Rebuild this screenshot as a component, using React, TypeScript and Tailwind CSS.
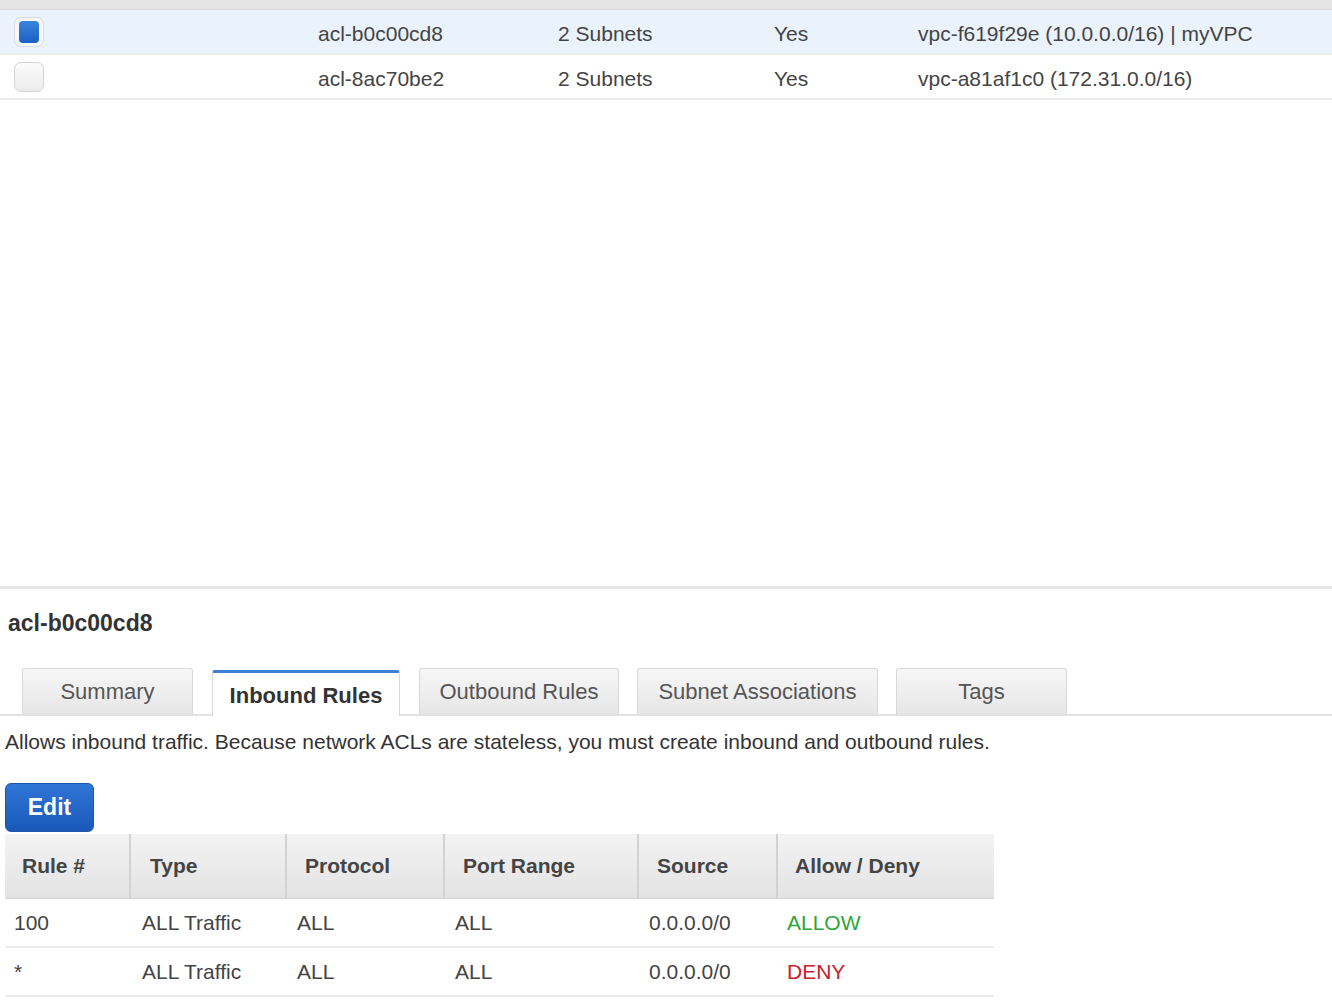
const ACLS = [
  { id: "acl-b0c00cd8", subnets: "2 Subnets", isDefault: "Yes", vpc: "vpc-f619f29e (10.0.0.0/16) | myVPC", selected: true },
  { id: "acl-8ac70be2", subnets: "2 Subnets", isDefault: "Yes", vpc: "vpc-a81af1c0 (172.31.0.0/16)", selected: false },
];

const TABS = [
  { label: "Summary", w: "w-[171px]", ml: "ml-[22px]" },
  { label: "Inbound Rules", w: "w-[188px]", ml: "ml-[19px]" },
  { label: "Outbound Rules", w: "w-[200px]", ml: "ml-[19px]" },
  { label: "Subnet Associations", w: "w-[241px]", ml: "ml-[18px]" },
  { label: "Tags", w: "w-[171px]", ml: "ml-[18px]" },
];

const RULES = [
  { rule: "100", type: "ALL Traffic", protocol: "ALL", port: "ALL", source: "0.0.0.0/0", action: "ALLOW" },
  { rule: "*", type: "ALL Traffic", protocol: "ALL", port: "ALL", source: "0.0.0.0/0", action: "DENY" },
];

const COLS = [
  { label: "Rule #", w: "w-[126px]", pl: "pl-[17px]", cpl: "pl-[9px]" },
  { label: "Type", w: "w-[156px]", pl: "pl-[19px]", cpl: "pl-[11px]" },
  { label: "Protocol", w: "w-[158px]", pl: "pl-[18px]", cpl: "pl-[10px]" },
  { label: "Port Range", w: "w-[194px]", pl: "pl-[18px]", cpl: "pl-[10px]" },
  { label: "Source", w: "w-[139px]", pl: "pl-[18px]", cpl: "pl-[10px]" },
  { label: "Allow / Deny", w: "w-[216px]", pl: "pl-[17px]", cpl: "pl-[9px]" },
];

function Checkbox({ checked }: { checked: boolean }) {
  if (checked) {
    return (
      <div className="w-[30px] h-[30px] rounded-[7px] border border-[#d6dbe2] bg-[#f4f6f9] flex items-center justify-center">
        <div className="w-[20px] h-[22px] rounded-[4px] bg-gradient-to-b from-[#3b84dc] to-[#1a60c4]" />
      </div>
    );
  }
  return (
    <div className="w-[30px] h-[30px] rounded-[7px] border border-[#d3d3d3] bg-gradient-to-b from-[#fbfbfb] to-[#ececec]" />
  );
}

export default function App() {
  return (
    <div className="w-[1332px] h-[1008px] overflow-hidden bg-white text-[#444] font-['Liberation_Sans',Arial,sans-serif]">
      <div className="h-[10px] bg-[#e4e4e4] border-b border-[#d9d9d9]" />
      {ACLS.map((a) => (
        <div
          key={a.id}
          className={
            "h-[45px] flex items-center text-[21px] border-b-2 border-[#ececec] " +
            (a.selected ? "bg-[#eaf2fb]" : "bg-white")
          }
        >
          <div className="w-[318px] pl-[14px]">
            <Checkbox checked={a.selected} />
          </div>
          <div className="w-[240px] pt-[4px]">{a.id}</div>
          <div className="w-[216px] pt-[4px]">{a.subnets}</div>
          <div className="w-[144px] pt-[4px]">{a.isDefault}</div>
          <div className="pt-[4px]">{a.vpc}</div>
        </div>
      ))}

      <div className="h-[486px]" />
      <div className="h-[3px] bg-[#e6e6e6]" />

      <div className="pl-[8px] pt-[17px] h-[60px] text-[23px] font-bold text-[#333]">acl-b0c00cd8</div>

      <div className="flex items-end h-[48px] mt-[19px] border-b-2 border-[#e2e2e2]">
        {TABS.map((t) => {
          const active = t.label === "Inbound Rules";
          return (
            <div
              key={t.label}
              className={
                t.w + " " + t.ml + " h-full flex items-center justify-center text-[22px] rounded-t-[3px] border-x border-t " +
                (active
                  ? "bg-white border-[#d9d9d9] border-t-[3px] border-t-[#3b7fd6] font-bold text-[#333] -mb-[2px] h-[50px] pt-[2px]"
                  : "bg-gradient-to-b from-[#f7f7f7] to-[#e6e6e6] border-[#d8d8d8] text-[#555]")
              }
            >
              {t.label}
            </div>
          );
        })}
      </div>

      <div className="pl-[5px] pt-[14px] text-[21px] text-[#333] leading-[24px]">
        Allows inbound traffic. Because network ACLs are stateless, you must create inbound and outbound rules.
      </div>

      <div className="pl-[5px] mt-[29px]">
        <div className="w-[89px] h-[49px] rounded-[6px] bg-gradient-to-b from-[#2f76d6] to-[#1a58b8] border border-[#1c56ad] flex items-center justify-center text-white font-bold text-[23px]">
          Edit
        </div>
      </div>

      <div className="ml-[5px] mt-[2px] w-[989px]">
        <div className="flex h-[65px] bg-gradient-to-b from-[#f3f3f3] to-[#e3e3e3] border-b border-[#d6d6d6]">
          {COLS.map((c, i) => (
            <div
              key={c.label}
              className={
                c.w + " " + c.pl + " flex items-center text-[21px] font-bold text-[#444] " +
                (i < COLS.length - 1 ? "border-r-2 border-[#d2d2d2]" : "")
              }
            >
              {c.label}
            </div>
          ))}
        </div>
        {RULES.map((r) => {
          const cells = [r.rule, r.type, r.protocol, r.port, r.source, r.action];
          return (
            <div key={r.rule} className="flex h-[49px] border-b-2 border-[#ececec]">
              {cells.map((v, i) => (
                <div
                  key={i}
                  className={
                    COLS[i].w + " " + COLS[i].cpl + " flex items-center text-[21px] " +
                    (i === 5 ? (v === "ALLOW" ? "text-[#2ea43a]" : "text-[#c8202a]") : "text-[#444]")
                  }
                >
                  {v}
                </div>
              ))}
            </div>
          );
        })}
      </div>
    </div>
  );
}
